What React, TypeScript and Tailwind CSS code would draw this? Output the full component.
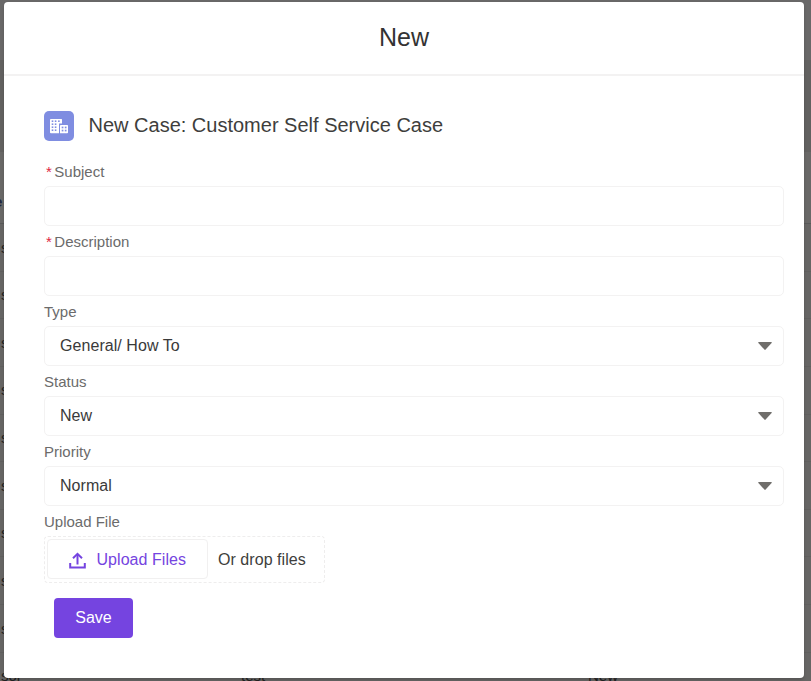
import type { ReactNode } from "react";

const rows = ["s", "s", "s", "s", "s", "s", "s", "s", "s"];

function Backdrop() {
  return (
    <div className="flex h-[681px] flex-col overflow-hidden bg-[#666564] text-[15px] text-[#222]">
      <div className="h-[60px] shrink-0 bg-[#696868]" />
      <div className="h-[92px] shrink-0 bg-[#626160]" />
      <div className="flex h-[72px] shrink-0 items-end border-b border-[#595959] bg-[#696867] pb-[10px] font-bold text-[#20263c]">
        <span className="-ml-[6px]">e</span>
      </div>
      {rows.map((t, i) => (
        <div key={i} className="flex h-[47.65px] shrink-0 items-center border-b border-[#605f5e] pt-px pl-[1px]">
          {t}
        </div>
      ))}
      <div className="flex h-[47.65px] shrink-0 items-center pl-[1px]">
        <span className="w-[240px]">sor</span>
        <span className="w-[347px]">test</span>
        <span>New</span>
      </div>
    </div>
  );
}

function Label({ required, children }: { required?: boolean; children: ReactNode }) {
  return (
    <div className="flex h-[30px] items-center pt-[2px] text-[15px] text-[#6b6b6b]">
      {required && <span className="mr-[2.5px] ml-[2px] text-[#e0263f]">*</span>}
      {children}
    </div>
  );
}

function Field({ label, required, value }: { label: string; required?: boolean; value?: string }) {
  return (
    <div>
      <Label required={required}>{label}</Label>
      <div className="flex h-10 items-center justify-between rounded-[5px] border border-[#f3f2f2] pr-[11px] pl-[15px] text-base text-[#3a3a3a]">
        {value && (
          <>
            <span className="tracking-[0.06px]">{value}</span>
            <svg width="14" height="8" viewBox="0 0 14 8" fill="#706e6b">
              <path d="M0.8 0h12.4q1 0 .4.9L7.6 7.6q-.6.6-1.2 0L.4.9Q-.2 0 .8 0z" />
            </svg>
          </>
        )}
      </div>
    </div>
  );
}

function BuildingIcon() {
  return (
    <svg width="30" height="30" viewBox="0 0 30 30" className="rounded-[5px] bg-[#7f8de1]">
      <path fill="#fff" d="M7 8H17.4q.6 0 .6.6V12.6h-3v9.6H7q-1 0-1-.8V8.8q0-.8 1-.8z M16.8 14H23.2q.8 0 .8.8v6.6q0 .8-.8.8h-7.2v-7.4q0-.8.8-.8z" />
      <g fill="#7f8de1">
        {[9.4, 12.4, 15.4, 18.4].map((y) => (
          <g key={y}>
            <rect x="7.7" y={y} width="1.6" height="1.6" />
            <rect x="10.8" y={y} width="1.6" height="1.6" />
          </g>
        ))}
        <rect x="14.1" y="9.4" width="1.6" height="1.6" />
        <rect x="17.7" y="15.6" width="1.7" height="1.7" />
        <rect x="20.8" y="15.6" width="1.7" height="1.7" />
        <rect x="17.7" y="18.7" width="1.7" height="1.7" />
        <rect x="20.8" y="18.7" width="1.7" height="1.7" />
      </g>
    </svg>
  );
}

export default function App() {
  return (
    <div className="relative h-[681px] w-[811px] overflow-hidden font-['Liberation_Sans',Arial,sans-serif]">
      <Backdrop />
      <div className="absolute top-[2px] left-1 flex h-[676px] w-[800px] flex-col rounded bg-white shadow-[0_2px_3px_rgba(0,0,0,0.16)]">
        <div className="flex h-[74px] items-center justify-center border-b-2 border-[#f3f2f2] text-[25px] text-[#333]">
          New
        </div>
        <div className="px-10 pt-[35px]">
          <div className="flex h-[30px] items-center gap-[14.5px] text-[20px] text-[#3e3e3c]">
            <BuildingIcon />
            <span className="-mt-[2px]">New Case: Customer Self Service Case</span>
          </div>
          <div className="mt-[15px] w-[740px]">
            <Field label="Subject" required />
            <Field label="Description" required />
            <Field label="Type" value="General/ How To" />
            <Field label="Status" value="New" />
            <Field label="Priority" value="Normal" />
            <Label>Upload File</Label>
            <div className="flex h-[47px] w-[281px] items-start rounded border border-dashed border-[#eeeded] pt-[2px] pl-[2px] text-base text-[#3e3e3c]">
              <div className="flex h-10 w-[161px] items-center rounded border border-[#f1f0f0] pl-[21px] text-[#7544e0]">
                <svg className="mt-[2px] mr-[10.5px]" width="17" height="17" viewBox="0 0 17 17" fill="none" stroke="currentColor" strokeWidth="2">
                  <path d="M1.2 11v4.6h14.6V11" />
                  <path d="M8.5 12.5V3" />
                  <path d="M4 6.2l4.5-4.4 4.5 4.4" />
                </svg>
                <span className="pt-[2px] tracking-[0.05px]">Upload Files</span>
              </div>
              <span className="ml-[10px] pt-px leading-10 tracking-[0.05px]">Or drop files</span>
            </div>
            <button className="mt-[15px] ml-[10px] block h-10 w-[79px] rounded bg-[#7544e0] text-base text-white">Save</button>
          </div>
        </div>
      </div>
    </div>
  );
}
